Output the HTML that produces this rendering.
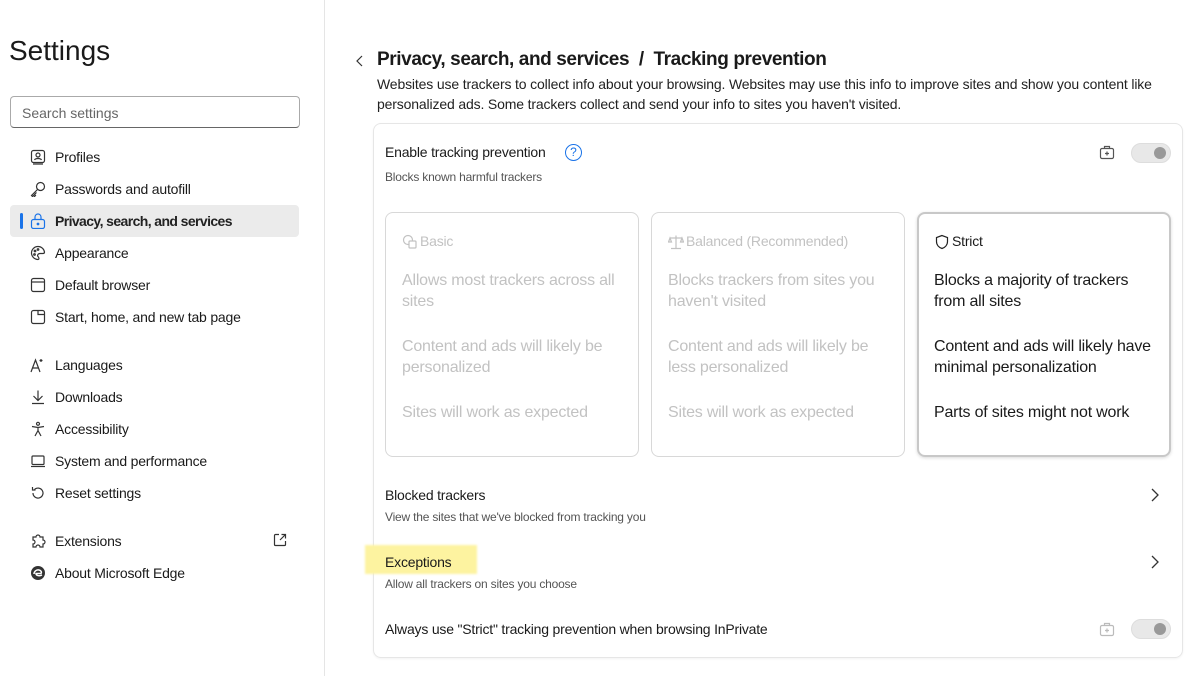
<!DOCTYPE html>
<html><head><meta charset="utf-8"><style>
*{box-sizing:border-box;margin:0;padding:0}
body{width:1202px;height:676px;background:#fff;font-family:"Liberation Sans",sans-serif;color:#1a1a1a;position:relative;overflow:hidden}
.side{position:absolute;left:0;top:0;width:325px;height:676px;border-right:1px solid #e5e5e5}
h1{position:absolute;left:9px;top:35px;font-size:28px;font-weight:400;color:#1a1a1a}
.search{position:absolute;left:10px;top:96px;width:290px;height:32px;border:1px solid #aaa;border-radius:4px;font-size:14px;color:#666;padding:8px 11px;border-bottom:1px solid #666}
.nav{position:absolute;left:10px;width:289px;height:32px;font-size:14px;display:flex;align-items:center;padding-left:45px;color:#1a1a1a;letter-spacing:-0.2px}
.nav svg{position:absolute;left:20px;top:8px}
.nav.sel{background:#ebebeb;border-radius:4px;font-weight:700;color:#222;letter-spacing:-0.6px}
.nav.sel::before{content:"";position:absolute;left:10px;top:8px;width:3px;height:16px;background:#1a73e8;border-radius:2px}
.abs{position:absolute}
.card{position:absolute;left:373px;top:123px;width:810px;height:535px;border:1px solid #e6e6e6;border-radius:8px;box-shadow:0 1px 2px rgba(0,0,0,.05)}
.opt{position:absolute;top:212px;width:254px;height:245px;border:1px solid #d8d8d8;border-radius:8px;color:#c2c2c2;font-size:16px;line-height:21px;letter-spacing:-0.2px}
.opt .t{position:absolute;left:16px;top:18px;font-size:14px;display:flex;align-items:center;gap:2px}
.opt p{position:absolute;left:16px;width:225px}
.tog{position:absolute;width:40px;height:20px;border-radius:10px;background:#e8e8e8;border:1px solid #ddd}
.tog::after{content:"";position:absolute;right:4px;top:3px;width:12px;height:12px;border-radius:50%;background:#999}
.small{font-size:12px;color:#555;letter-spacing:-0.2px}
.r14{font-size:14px;letter-spacing:-0.2px}
</style></head><body>
<div class="side">
<h1>Settings</h1>
<div class="search">Search settings</div>
<div class="nav" style="top:141px"><svg width="16" height="16" fill="none" stroke="#333" stroke-width="1.2"><rect x="1.5" y="1.5" width="13" height="12" rx="2"/><circle cx="8" cy="6" r="2"/><path d="M4.5 11c1-2 6-2 7 0M3 15h10"/></svg>Profiles</div>
<div class="nav" style="top:173px"><svg width="16" height="16" fill="none" stroke="#333" stroke-width="1.2"><circle cx="10.5" cy="5.5" r="4"/><path d="M7.5 8.5L1.5 14.5l1 1 1-1 1 1 1-1-1-1 2-2"/></svg>Passwords and autofill</div>
<div class="nav sel" style="top:205px"><svg width="16" height="16" fill="none" stroke="#1a73e8" stroke-width="1.2"><rect x="1.5" y="6.5" width="13" height="9" rx="2"/><path d="M5 6.5V4a3 3 0 0 1 6 0v2.5"/><circle cx="8" cy="11" r=".8" fill="#1a73e8"/></svg>Privacy, search, and services</div>
<div class="nav" style="top:237px"><svg width="16" height="16" fill="none" stroke="#333" stroke-width="1.2"><path d="M8 1.5a6.5 6.5 0 1 0 0 13c1.5 0 1-2 0-3s0-3 2-3h3c1.5 0 1.5-1 1.5-1.5A6.5 6.5 0 0 0 8 1.5z"/><circle cx="5" cy="6" r=".8"/><circle cx="8" cy="4.5" r=".8"/><circle cx="4.5" cy="9.5" r=".8"/></svg>Appearance</div>
<div class="nav" style="top:269px"><svg width="16" height="16" fill="none" stroke="#333" stroke-width="1.2"><rect x="1.5" y="1.5" width="13" height="13" rx="2"/><path d="M1.5 5h13"/></svg>Default browser</div>
<div class="nav" style="top:301px"><svg width="16" height="16" fill="none" stroke="#333" stroke-width="1.2"><rect x="1.5" y="1.5" width="13" height="13" rx="2"/><path d="M8 1.5v4h6.5"/></svg>Start, home, and new tab page</div>
<div class="nav" style="top:349px"><svg width="16" height="16" fill="none" stroke="#333" stroke-width="1.2"><path d="M1 15L5.5 3 10 15M2.7 11h5.6M11 2v3M9.5 3.5h3"/></svg>Languages</div>
<div class="nav" style="top:381px"><svg width="16" height="16" fill="none" stroke="#333" stroke-width="1.2"><path d="M8 1.5v10M3.5 7l4.5 4.5L12.5 7M2 14.5h12"/></svg>Downloads</div>
<div class="nav" style="top:413px"><svg width="16" height="16" fill="none" stroke="#333" stroke-width="1.2"><circle cx="8" cy="2.8" r="1.5"/><path d="M2 5.5l6 1 6-1M8 6.5v3l-3 5.5M8 9.5l3 5.5"/></svg>Accessibility</div>
<div class="nav" style="top:445px"><svg width="16" height="16" fill="none" stroke="#333" stroke-width="1.2"><rect x="2" y="3" width="12" height="8.5" rx="1"/><path d="M1 13.5h14"/></svg>System and performance</div>
<div class="nav" style="top:477px"><svg width="16" height="16" fill="none" stroke="#333" stroke-width="1.2"><path d="M3 8a5 5 0 1 0 1.5-3.5M2.5 2v3h3"/></svg>Reset settings</div>
<div class="nav" style="top:525px"><svg width="16" height="16" fill="none" stroke="#333" stroke-width="1.2"><path d="M3 4h3a2 2 0 0 1 4 0h3v3a2 2 0 0 1 0 4v3H10a2 2 0 0 0-4 0H3v-3a2 2 0 0 0 0-4z"/></svg>Extensions<svg style="left:262px;top:7px" width="16" height="16" fill="none" stroke="#333" stroke-width="1.2"><path d="M7 2.5H3.5a1 1 0 0 0-1 1v9a1 1 0 0 0 1 1h9a1 1 0 0 0 1-1V9M9.5 2.5h4v4M13.5 2.5L8 8"/></svg></div>
<div class="nav" style="top:557px"><svg width="16" height="16"><circle cx="8" cy="8" r="7" fill="#333"/><path d="M4 9c0-3 3-4.5 5-4s3 2 2 3.5H6c0 2 3 3 6 1.5" fill="none" stroke="#fff" stroke-width="1.5"/></svg>About Microsoft Edge</div>
</div>

<svg class="abs" style="left:355px;top:54px" width="10" height="14" fill="none" stroke="#333" stroke-width="1.2"><path d="M7 2L2 7l5 5"/></svg>
<div class="abs" style="left:377px;top:49px;font-size:19px;font-weight:700;color:#1a1a1a;letter-spacing:-0.4px">Privacy, search, and services &nbsp;/&nbsp; Tracking prevention</div>
<div class="abs" style="left:377px;top:74px;width:810px;font-size:14px;line-height:20px;color:#222;letter-spacing:-0.15px">Websites use trackers to collect info about your browsing. Websites may use this info to improve sites and show you content like personalized ads. Some trackers collect and send your info to sites you haven't visited.</div>

<div class="card"></div>
<div class="abs r14" style="left:385px;top:144px">Enable tracking prevention</div>
<div class="abs" style="left:565px;top:144px;width:17px;height:17px;border:1.3px solid #1a73e8;border-radius:50%;color:#1a73e8;font-size:12px;text-align:center;line-height:15px">?</div>
<div class="abs small" style="left:385px;top:170px">Blocks known harmful trackers</div>
<svg class="abs" style="left:1099px;top:144px" width="16" height="16" fill="none" stroke="#555" stroke-width="1.2"><rect x="1.5" y="4.5" width="13" height="10" rx="1.5"/><path d="M5.5 4.5v-2h5v2M8 7.5v4M6 9.5h4"/></svg>
<div class="tog" style="left:1131px;top:143px"></div>

<div class="opt" style="left:385px"><div class="t"><svg width="16" height="16" fill="none" stroke="#c2c2c2" stroke-width="1.2"><circle cx="6" cy="6" r="4.5"/><rect x="7" y="7" width="7" height="7" rx="1" fill="#fff"/></svg>Basic</div><p style="top:57px">Allows most trackers across all sites</p><p style="top:123px">Content and ads will likely be personalized</p><p style="top:189px">Sites will work as expected</p></div>
<div class="opt" style="left:651px"><div class="t"><svg width="16" height="16" fill="none" stroke="#c2c2c2" stroke-width="1.2"><path d="M8 1.5v13M3 14.5h10M2 4h12M2 4l-1.5 4h3zM14 4l-1.5 4h3z"/></svg>Balanced (Recommended)</div><p style="top:57px">Blocks trackers from sites you haven't visited</p><p style="top:123px">Content and ads will likely be less personalized</p><p style="top:189px">Sites will work as expected</p></div>
<div class="opt" style="left:917px;border:2px solid #c8c8c8;color:#1a1a1a;box-shadow:0 1px 3px rgba(0,0,0,.15)"><div class="t" style="left:15px;top:17px"><svg width="16" height="16" fill="none" stroke="#222" stroke-width="1.2"><path d="M8 1.5L2.5 3.5v4c0 3.5 2.5 6 5.5 7 3-1 5.5-3.5 5.5-7v-4z"/></svg>Strict</div><p style="top:56px;left:15px">Blocks a majority of trackers from all sites</p><p style="top:122px;left:15px">Content and ads will likely have minimal personalization</p><p style="top:188px;left:15px">Parts of sites might not work</p></div>

<div class="abs r14" style="left:385px;top:487px">Blocked trackers</div>
<div class="abs small" style="left:385px;top:510px">View the sites that we've blocked from tracking you</div>
<svg class="abs" style="left:1150px;top:487px" width="10" height="16" fill="none" stroke="#333" stroke-width="1.3"><path d="M2 2l6 6-6 6"/></svg>
<div class="abs" style="left:365px;top:545px;width:112px;height:29px;background:#fdf3a0;filter:blur(1px)"></div>
<div class="abs r14" style="left:385px;top:554px">Exceptions</div>
<div class="abs small" style="left:385px;top:577px">Allow all trackers on sites you choose</div>
<svg class="abs" style="left:1150px;top:554px" width="10" height="16" fill="none" stroke="#333" stroke-width="1.3"><path d="M2 2l6 6-6 6"/></svg>
<div class="abs r14" style="left:385px;top:621px">Always use "Strict" tracking prevention when browsing InPrivate</div>
<svg class="abs" style="left:1099px;top:621px" width="16" height="16" fill="none" stroke="#bbb" stroke-width="1.2"><rect x="1.5" y="4.5" width="13" height="10" rx="1.5"/><path d="M5.5 4.5v-2h5v2M8 7.5v4M6 9.5h4"/></svg>
<div class="tog" style="left:1131px;top:619px"></div>
</body></html>
